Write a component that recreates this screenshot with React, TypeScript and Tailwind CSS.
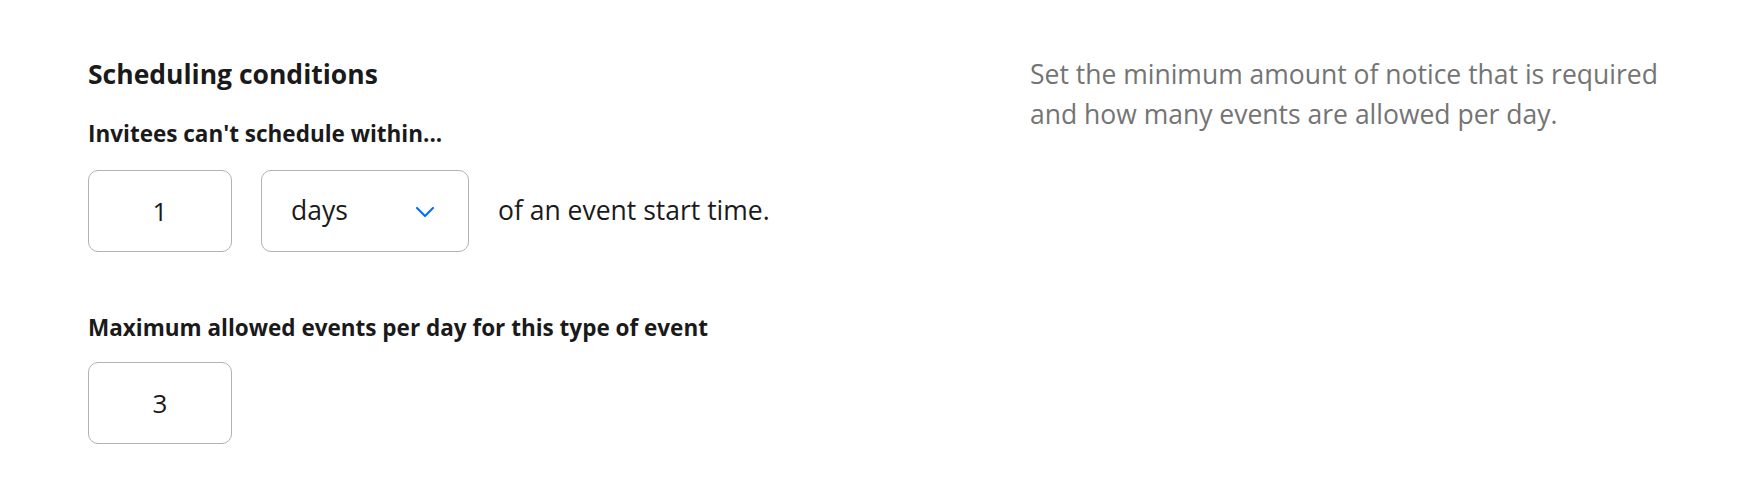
const font = { fontFamily: '"Open Sans", "Liberation Sans", sans-serif' };

const NumberBox = ({ value }: { value: string }) => (
  <div className="flex h-[82px] w-[144px] items-center justify-center rounded-[10px] border border-[#b2b2b2] text-[26px] text-[#1a1a1a]">
    {value}
  </div>
);

const App = () => {
  return (
    <div className="flex min-h-[502px] w-full bg-white pl-[88px] pt-[54px] text-[#1a1a1a] antialiased" style={font}>
      <div className="w-[942px] shrink-0">
        <h2 className="text-[26.5px] font-bold leading-[40px]">Scheduling conditions</h2>

        <p className="mt-[24px] text-[22.5px] font-bold leading-[32px]">Invitees can't schedule within...</p>
        <div className="mt-[20px] flex items-center gap-[29px]">
          <NumberBox value="1" />
          <div className="flex h-[82px] w-[208px] items-center justify-between rounded-[10px] border border-[#b2b2b2] pl-[29px] pr-[34px] text-[26.5px]">
            <span>days</span>
            <svg width="18" height="10" viewBox="0 0 18 10" fill="none" className="mt-[2px]">
              <polyline points="1,1 9,9 17,1" stroke="#006bff" strokeWidth="2" strokeLinecap="round" strokeLinejoin="round" />
            </svg>
          </div>
          <span className="text-[26.5px]">of an event start time.</span>
        </div>

        <p className="mt-[60px] text-[22.5px] font-bold leading-[32px]">Maximum allowed events per day for this type of event</p>
        <div className="mt-[18px]">
          <NumberBox value="3" />
        </div>
      </div>

      <div className="w-[700px] shrink-0">
        <p className="text-[26.5px] leading-[40px] text-[#747474]">
          Set the minimum amount of notice that is required
          <br />
          and how many events are allowed per day.
        </p>
      </div>
    </div>
  );
};

export default App;
